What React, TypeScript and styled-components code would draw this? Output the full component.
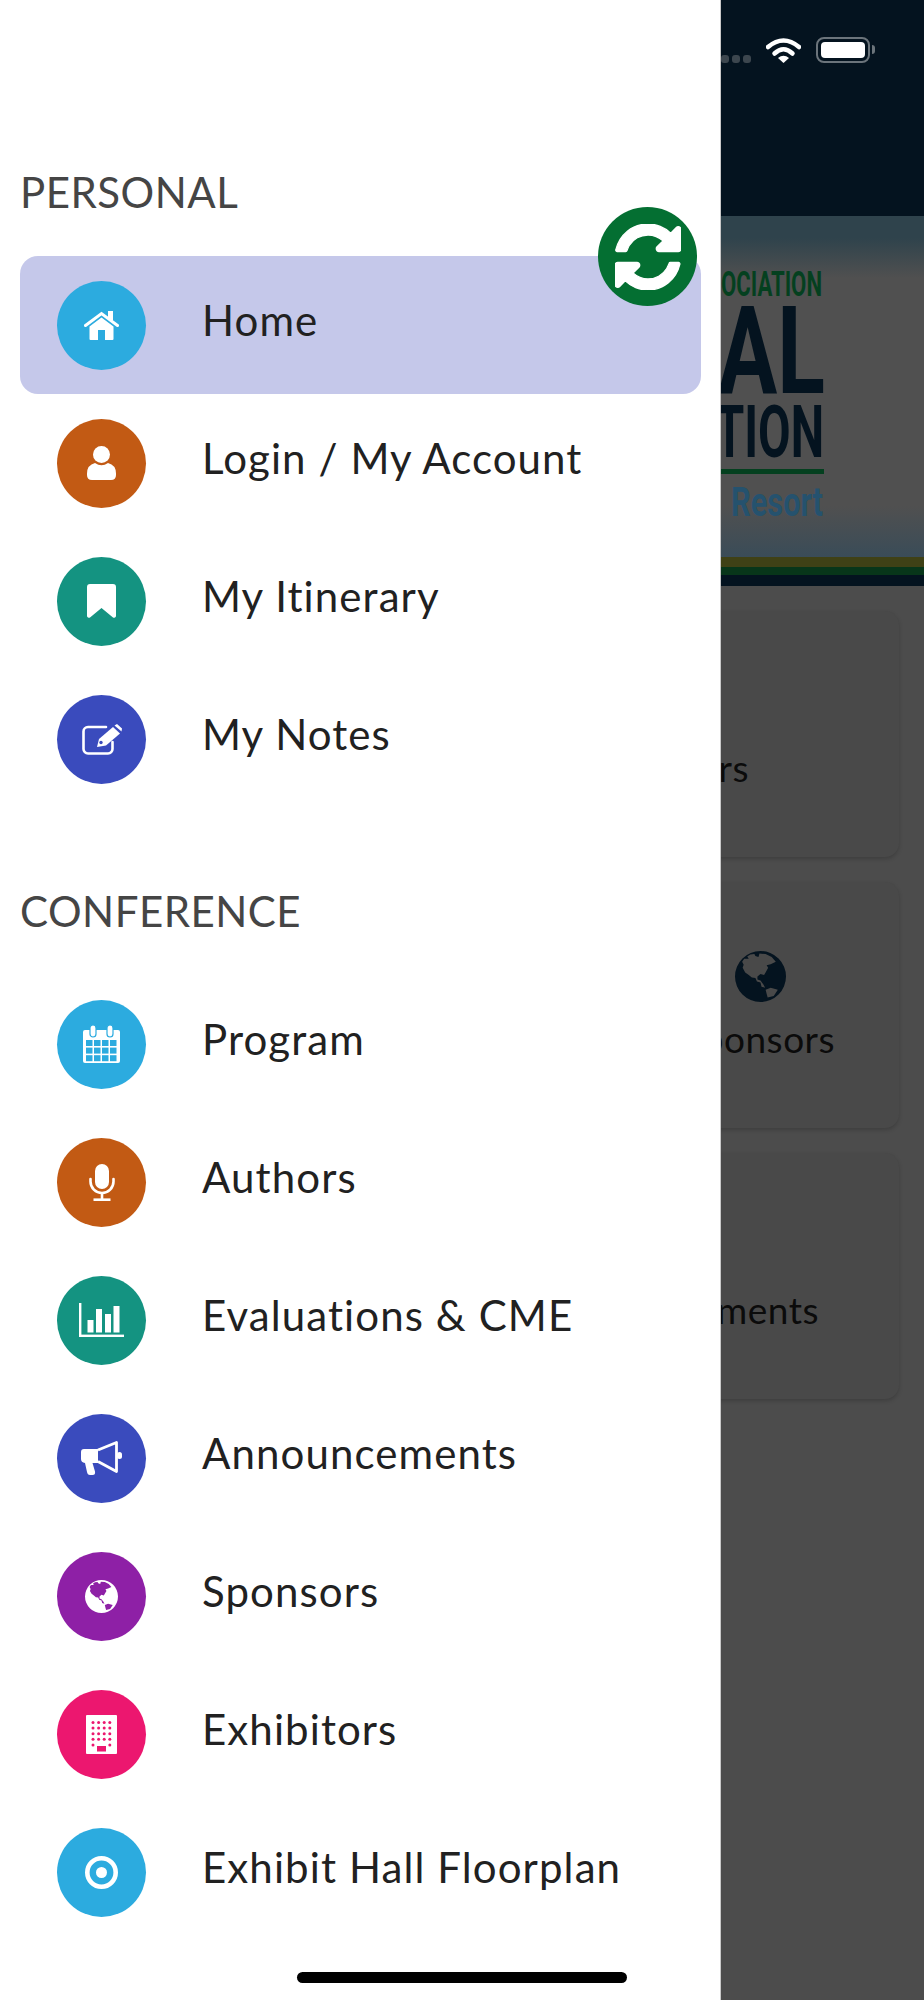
import React from "react";
import styled, { createGlobalStyle } from "styled-components";

const Global = createGlobalStyle`
  html, body { margin: 0; padding: 0; background: #4c4c4c; }
  * { box-sizing: border-box; }
`;

const Page = styled.div`
  position: relative;
  display: flex;
  width: 924px;
  height: 2000px;
  overflow: hidden;
  font-family: Lato, "Open Sans", sans-serif;
`;

const Drawer = styled.nav`
  flex: 0 0 721px;
  background: #fff;
  border-right: 1px solid #c9c9c9;
  padding-top: 160px;
`;

const SectionTitle = styled.h2<{ $first?: boolean }>`
  margin: ${(p) => (p.$first ? "0" : "71px")} 0 32px;
  padding-left: 20px;
  height: 64px;
  line-height: 64px;
  font-size: 42px;
  font-weight: 400;
  color: #454545;
  letter-spacing: 0.5px;
`;

const Row = styled.div<{ $active?: boolean }>`
  display: flex;
  align-items: center;
  gap: 56px;
  width: 681px;
  height: 138px;
  margin-left: 20px;
  padding-left: 37px;
  border-radius: 18px;
  background: ${(p) => (p.$active ? "#c5c8ea" : "transparent")};
`;

const IconCircle = styled.span<{ $color: string }>`
  flex: 0 0 89px;
  height: 89px;
  border-radius: 50%;
  background: ${(p) => p.$color};
  color: #fff;
  display: flex;
  align-items: center;
  justify-content: center;
`;

const RowLabel = styled.span`
  font-size: 42px;
  line-height: 50px;
  margin-bottom: 10px;
  color: #212121;
  letter-spacing: 1.1px;
  white-space: nowrap;
`;

const SyncButton = styled.button`
  position: absolute;
  left: 598px;
  top: 207px;
  width: 99px;
  height: 99px;
  border: none;
  border-radius: 50%;
  padding: 0;
  background: #046f32;
  color: #fff;
  display: flex;
  align-items: center;
  justify-content: center;
`;

const HomeBar = styled.div`
  position: absolute;
  left: 297px;
  top: 1972px;
  width: 330px;
  height: 11px;
  border-radius: 6px;
  background: #000;
`;

const Backdrop = styled.div`
  flex: 1;
  min-width: 0;
  display: flex;
  flex-direction: column;
  overflow: hidden;
  background: #4c4c4c;
`;

const Header = styled.header`
  flex: 0 0 216px;
  background: #04131f;
  display: flex;
  justify-content: flex-end;
  align-items: flex-start;
  gap: 15px;
  padding: 37px 51px 0 0;
`;

const Dots = styled.div`
  display: flex;
  gap: 3px;
  margin-top: 18px;
`;

const Dot = styled.span`
  width: 8px;
  height: 8px;
  border-radius: 3px;
  background: #3c464e;
`;

const Battery = styled.div`
  position: relative;
  width: 54px;
  height: 26px;
  padding: 3px;
  border: 2px solid #6b747b;
  border-radius: 8px;
  margin-right: 3px;
  &::after {
    content: "";
    position: absolute;
    right: -7px;
    top: 6px;
    width: 3px;
    height: 9px;
    border-radius: 0 3px 3px 0;
    background: #6b747b;
  }
`;

const BatteryFill = styled.div`
  height: 100%;
  border-radius: 4px;
  background: #fff;
`;

const Banner = styled.div`
  flex: 0 0 370px;
  background: linear-gradient(
    180deg,
    #2f434c 0,
    #2f434c 22px,
    #505050 62px,
    #505050 290px,
    #3a4c58 341px
  );
  display: flex;
  flex-direction: column;
  justify-content: flex-end;
`;

const BannerArt = styled.svg`
  display: block;
  flex: 1;
  width: 203px;
  min-height: 0;
`;

const Stripe = styled.div<{ $color: string; $h: number }>`
  flex: 0 0 ${(p) => p.$h}px;
  background: ${(p) => p.$color};
`;

const Cards = styled.div`
  display: flex;
  flex-direction: column;
  gap: 25px;
  margin-left: -40px;
  padding: 25px 25px 0 0;
`;

const Card = styled.div`
  height: 246px;
  padding-top: 3px;
  background: #494949;
  border-radius: 14px;
  box-shadow: 0 2px 4px rgba(0, 0, 0, 0.18);
  display: flex;
  flex-direction: column;
  align-items: flex-end;
  justify-content: center;
`;

const CardIcon = styled.div<{ $right: number }>`
  height: 51px;
  margin-right: ${(p) => p.$right}px;
  color: #04131f;
`;

const CardLabel = styled.div<{ $right: number }>`
  margin-right: ${(p) => p.$right}px;
  margin-top: 14px;
  height: 46px;
  line-height: 46px;
  font-size: 37px;
  letter-spacing: 0.5px;
  color: #0b0b0b;
  white-space: nowrap;
`;

const Wifi = () => (
  <svg width="35" height="26" viewBox="0 0 35 26">
    <path d="M2 10Q17.5-3 33 10" fill="none" stroke="#fff" strokeWidth="4.5" strokeLinecap="round" />
    <path d="M8.5 16.5Q17.5 8 26.5 16.5" fill="none" stroke="#fff" strokeWidth="4.5" strokeLinecap="round" />
    <path d="M12 21Q17.5 16.5 23 21L17.5 26Z" fill="#fff" />
  </svg>
);

const SyncIcon = () => (
  <svg width="66" height="66" viewBox="0 0 1536 1536" fill="#fff" stroke="#fff" strokeWidth="30">
    <path d="M1511 928q0 5-1 7-64 268-268 434.500t-478 166.500q-146 0-282.500-55t-243.500-157l-129 129q-19 19-45 19t-45-19-19-45v-448q0-26 19-45t45-19h448q26 0 45 19t19 45-19 45l-137 137q71 66 161 102t187 36q134 0 250-65t186-179q11-17 53-117 8-23 30-23h192q13 0 22.500 9.500t9.500 22.500zm25-800v448q0 26-19 45t-45 19h-448q-26 0-45-19t-19-45 19-45l138-138q-148-137-349-137-134 0-250 65t-186 179q-11 17-53 117-8 23-30 23h-199q-13 0-22.500-9.500t-9.500-22.500v-7q65-268 270-434.500t480-166.500q146 0 284 55.500t245 156.500l130-129q19-19 45-19t45 19 19 45z" />
  </svg>
);

const GlobeIcon = ({ size }: { size: number }) => (
  <svg width={size} height={size} viewBox="0 0 100 100" fill="currentColor" fillRule="evenodd">
    <path d="M50 0a50 50 0 1 1 0 100a50 50 0 1 1 0-100Z M30 7L24 11L27 15L18 15L14 21L17 27L15 33L20 42L27 47L33 52L40 53L43 60L50 62L52 70L59 72L56 66L50 58L44 56L44 50L50 45L57 47L60 42L65 33L62 28L70 26L80 21L72 12L60 6L48 5L46 12L40 10L38 6Z M60 76L70 72L84 76L76 88L64 91L62 84Z" />
  </svg>
);

const HomeIcon = () => (
  <svg width="35" height="29" viewBox="0 0 35 29">
    <rect x="24" y="0" width="5" height="9" fill="#fff" />
    <path d="M1.5 14.5L17.5 2.5L33.5 14.5" fill="none" stroke="#fff" strokeWidth="3" strokeLinecap="round" />
    <path d="M5.500 15.500L17.500 6.500L29.500 15.500V28a1 1 0 0 1-1 1H21V19H14V29H6.500a1 1 0 0 1-1-1Z" fill="#fff" />
  </svg>
);

const UserIcon = () => (
  <svg width="29" height="34" viewBox="0 0 29 34">
    <circle cx="14.5" cy="8.5" r="8.5" fill="#fff" />
    <path d="M8 17Q14.5 21.5 21 17Q29 19 29 27.5V29Q29 34 24 34H5Q0 34 0 29V27.5Q0 19 8 17Z" fill="#fff" />
  </svg>
);

const BookmarkIcon = () => (
  <svg width="29" height="35" viewBox="0 0 29 35">
    <path d="M3 0H26a3 3 0 0 1 3 3V32a2 2 0 0 1-3 1.5L14.5 24L3 33.5A2 2 0 0 1 0 32V3A3 3 0 0 1 3 0Z" fill="#fff" />
  </svg>
);

const NoteIcon = ({ color }: { color: string }) => (
  <svg width="40" height="31" viewBox="0 0 40 31">
    <path d="M24 3H6a4.5 4.5 0 0 0-4.500 4.500V25a4.500 4.500 0 0 0 4.500 4.500H26a4.500 4.500 0 0 0 4.500-4.500V18" fill="none" stroke="#fff" strokeWidth="2.6" strokeLinecap="round" />
    <path d="M15 23L17 15L31 3L38 9.500L24 21.500Z" fill="#fff" />
    <path d="M32.500 1.500L35 0L40 4.500L39.500 7.500Z" fill="#fff" />
    <circle cx="19" cy="18.500" r="1.700" fill={color} />
  </svg>
);

const CalendarIcon = ({ color }: { color: string }) => {
  const cells: React.ReactElement[] = [];
  for (let r = 0; r < 3; r++) {
    for (let c = 0; c < 4; c++) {
      cells.push(<rect key={`${r}-${c}`} x={3 + c * 8} y={15 + r * 7.6} width="6.5" height="6" fill={color} />);
    }
  }
  return (
    <svg width="37" height="38" viewBox="0 0 37 38">
      <rect x="0" y="5" width="37" height="33" rx="2" fill="#fff" />
      <rect x="7" y="0" width="6" height="12" rx="3" fill="#fff" stroke={color} strokeWidth="1.2" />
      <rect x="24" y="0" width="6" height="12" rx="3" fill="#fff" stroke={color} strokeWidth="1.2" />
      {cells}
    </svg>
  );
};

const MicIcon = () => (
  <svg width="26" height="37" viewBox="0 0 26 37">
    <rect x="6" y="0" width="14" height="25" rx="7" fill="#fff" />
    <path d="M1.5 15V17.5a11.5 11.5 0 0 0 23 0V15" fill="none" stroke="#fff" strokeWidth="2.6" strokeLinecap="round" />
    <rect x="11.7" y="28" width="2.6" height="7" fill="#fff" />
    <rect x="4.5" y="34.4" width="17" height="2.6" fill="#fff" />
  </svg>
);

const ChartIcon = () => (
  <svg width="45" height="34" viewBox="0 0 45 34" fill="#fff">
    <rect x="0" y="0" width="2.4" height="34" />
    <rect x="0" y="31.6" width="45" height="2.4" />
    <rect x="8.5" y="17" width="6" height="12.5" />
    <rect x="17" y="6" width="6" height="23.5" />
    <rect x="26" y="11" width="6" height="18.5" />
    <rect x="34.5" y="3" width="6" height="26.5" />
  </svg>
);

const MegaphoneIcon = () => (
  <svg width="41" height="34" viewBox="0 0 41 34">
    <path d="M3 8H17V22H11.5L14 30.5Q14.6 34 11.5 34H9Q6.5 34 6 31L4 22Q0 21.5 0 18V11Q0 8 3 8Z" fill="#fff" />
    <path d="M17 9L35.5 1.5V30.5L17 20.5" fill="none" stroke="#fff" strokeWidth="2.8" strokeLinejoin="round" />
    <rect x="36" y="11" width="5" height="7" rx="2.5" fill="#fff" />
  </svg>
);

const BuildingIcon = ({ color }: { color: string }) => {
  const dots: React.ReactElement[] = [];
  for (let r = 0; r < 5; r++) {
    for (let c = 0; c < 4; c++) {
      if (r === 4 && (c === 1 || c === 2)) continue;
      dots.push(<circle key={`${r}-${c}`} cx={7 + c * 5.6} cy={7.5 + r * 5.6} r="1.5" fill={color} />);
    }
  }
  return (
    <svg width="31" height="39" viewBox="0 0 31 39">
      <rect width="31" height="39" rx="1" fill="#fff" />
      {dots}
      <rect x="11" y="31" width="9" height="5.5" fill={color} />
    </svg>
  );
};

const TargetIcon = () => (
  <svg width="33" height="33" viewBox="0 0 33 33">
    <circle cx="16.5" cy="16.5" r="14.2" fill="none" stroke="#fff" strokeWidth="4.6" />
    <circle cx="16.5" cy="16.5" r="5.5" fill="#fff" />
  </svg>
);

const BLUE = "#2cabdf";
const ORANGE = "#c25a14";
const TEAL = "#149381";
const INDIGO = "#3a4bbd";
const PURPLE = "#8e20a6";
const PINK = "#ec176f";

type Item = { label: string; color: string; icon: React.ReactNode; active?: boolean };

const personal: Item[] = [
  { label: "Home", color: BLUE, icon: <HomeIcon />, active: true },
  { label: "Login / My Account", color: ORANGE, icon: <UserIcon /> },
  { label: "My Itinerary", color: TEAL, icon: <BookmarkIcon /> },
  { label: "My Notes", color: INDIGO, icon: <NoteIcon color={INDIGO} /> },
];

const conference: Item[] = [
  { label: "Program", color: BLUE, icon: <CalendarIcon color={BLUE} /> },
  { label: "Authors", color: ORANGE, icon: <MicIcon /> },
  { label: "Evaluations & CME", color: TEAL, icon: <ChartIcon /> },
  { label: "Announcements", color: INDIGO, icon: <MegaphoneIcon /> },
  { label: "Sponsors", color: PURPLE, icon: <GlobeIcon size={33} /> },
  { label: "Exhibitors", color: PINK, icon: <BuildingIcon color={PINK} /> },
  { label: "Exhibit Hall Floorplan", color: BLUE, icon: <TargetIcon /> },
];

const MenuRows = ({ items }: { items: Item[] }) => (
  <>
    {items.map((it) => (
      <Row key={it.label} $active={it.active}>
        <IconCircle $color={it.color}>{it.icon}</IconCircle>
        <RowLabel>{it.label}</RowLabel>
      </Row>
    ))}
  </>
);

const LogoArt = () => (
  <BannerArt viewBox="0 0 203 341" preserveAspectRatio="xMinYMin slice">
    <g fontFamily="Roboto, sans-serif" fontWeight="700">
      <text x="0" y="80" fontSize="35" fill="#04401f" textLength="101" lengthAdjust="spacingAndGlyphs">OCIATION</text>
      <text x="-3" y="177" fontSize="122" fill="#04131f" textLength="107" lengthAdjust="spacingAndGlyphs">AL</text>
      <text x="-6" y="241" fontSize="73" fill="#04131f" textLength="109" lengthAdjust="spacingAndGlyphs">TION</text>
      <rect x="0" y="253" width="103" height="5" fill="#04401f" />
      <text x="10" y="300" fontSize="40" fill="#25526e" textLength="92" lengthAdjust="spacingAndGlyphs">Resort</text>
    </g>
  </BannerArt>
);

export default function App() {
  return (
    <Page>
      <Global />
      <Drawer>
        <SectionTitle $first>PERSONAL</SectionTitle>
        <MenuRows items={personal} />
        <SectionTitle>CONFERENCE</SectionTitle>
        <MenuRows items={conference} />
      </Drawer>
      <Backdrop>
        <Header>
          <Dots>
            <Dot />
            <Dot />
            <Dot />
          </Dots>
          <Wifi />
          <Battery>
            <BatteryFill />
          </Battery>
        </Header>
        <Banner>
          <LogoArt />
          <Stripe $color="#3f4116" $h={10} />
          <Stripe $color="#08361a" $h={8} />
          <Stripe $color="#04131f" $h={11} />
        </Banner>
        <Cards>
          <Card>
            <CardIcon $right={150} />
            <CardLabel $right={150}>Authors</CardLabel>
          </Card>
          <Card>
            <CardIcon $right={113}>
              <GlobeIcon size={51} />
            </CardIcon>
            <CardLabel $right={64}>Sponsors</CardLabel>
          </Card>
          <Card>
            <CardIcon $right={80} />
            <CardLabel $right={80}>Announcements</CardLabel>
          </Card>
        </Cards>
      </Backdrop>
      <SyncButton aria-label="Sync">
        <SyncIcon />
      </SyncButton>
      <HomeBar />
    </Page>
  );
}
